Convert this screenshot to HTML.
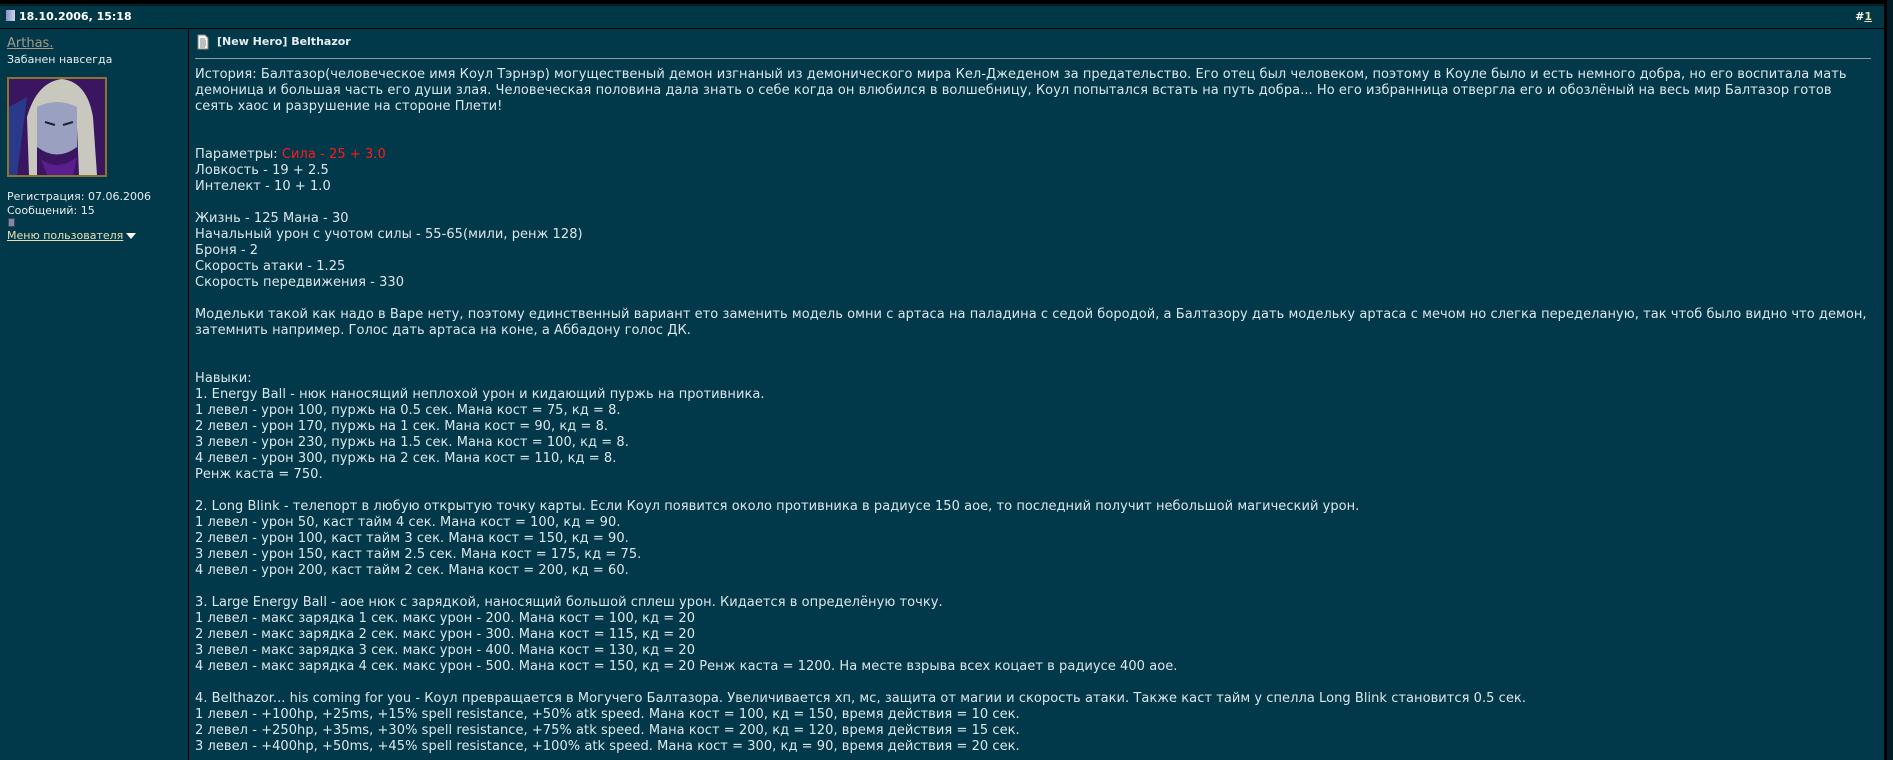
<!DOCTYPE html>
<html><head><meta charset="utf-8"><style>
html,body{margin:0;padding:0;width:1893px;height:760px;overflow:hidden;background:#001a22;}
body{position:relative;font-family:"DejaVu Sans","Liberation Sans",sans-serif;}
.top{position:absolute;left:0;top:0;width:1893px;height:4px;background:#000;}
.topline{position:absolute;left:0;top:4px;width:1885px;height:1px;background:#012a35;}
.hdr{position:absolute;left:0;top:6px;width:1884px;height:22px;background:#023846;border-bottom:1px solid #000;}
.hdr .d{position:absolute;left:19px;top:4px;color:#fff;font-weight:bold;font-size:11px;}
.hdr .n{position:absolute;right:12px;top:4px;color:#fff;font-weight:bold;font-size:11px;}
.hdr .n u{color:#e8e0b0;}
.doc{position:absolute;left:6px;top:10px;width:9px;height:11px;background:linear-gradient(90deg,#8890c0,#d0d4f0);}
.left{position:absolute;left:0;top:29px;width:188px;height:731px;background:#02394a;border-right:1px solid #000;}
.right{position:absolute;left:189px;top:29px;width:1695px;height:731px;background:#02394a;}
.rb{position:absolute;left:1884px;top:0;width:3px;height:760px;background:#000;}
.rb2{position:absolute;left:1887px;top:0;width:6px;height:760px;background:#001d26;}
.l{position:absolute;left:7px;font-size:11px;color:#e6eef0;white-space:nowrap;}
.title{position:absolute;left:217px;top:35px;font-size:11px;font-weight:bold;color:#e6eef0;}
.hr{position:absolute;left:195px;top:58px;width:1676px;height:1px;background:#8a9ea4;}
.txt{position:absolute;left:195px;top:67px;font-size:13px;line-height:16px;color:#dbe6ea;white-space:pre;letter-spacing:0.05px;}
.red{color:#ff1a1a;}
</style></head><body>
<div class="top"></div><div class="topline"></div>
<div class="hdr"><span class="d">18.10.2006, 15:18</span><span class="n">#<u>1</u></span></div>
<div class="doc"></div>
<div class="left"></div>
<div class="right"></div>
<div class="rb"></div><div class="rb2"></div>
<div class="l" style="top:36px;font-size:13px;color:#a89888;text-decoration:underline;">Arthas.</div>
<div class="l" style="top:53px;">Забанен навсегда</div>
<svg style="position:absolute;left:7px;top:77px" width="100" height="100" viewBox="0 0 100 100">
<rect x="0" y="0" width="100" height="100" fill="#8a7430"/>
<rect x="2" y="2" width="96" height="96" fill="#3a1660"/>
<path d="M2 30 L20 20 L10 98 L2 98Z" fill="#2a3a8a"/>
<path d="M22 98 L20 40 Q30 5 55 2 Q80 5 86 40 L90 98 L72 98 L70 50 L30 50 L30 98Z" fill="#c8c8be"/>
<path d="M30 30 Q50 20 70 30 L70 70 Q50 85 30 70Z" fill="#9aa0c0"/>
<path d="M34 82 L40 98 L66 98 L70 80 Q50 95 34 82Z" fill="#5a1e90"/>
<path d="M38 45 L48 48 M56 48 L66 45" stroke="#223" stroke-width="2"/>
</svg>
<div class="l" style="top:190px;">Регистрация: 07.06.2006</div>
<div class="l" style="top:204px;">Сообщений: 15</div>
<div style="position:absolute;left:8px;top:218px;width:5px;height:7px;background:#8088a8;border:1px solid #445;"></div>
<div class="l" style="top:229px;color:#e8e0b0;text-decoration:underline;">Меню пользователя</div>
<div style="position:absolute;left:126px;top:233px;width:0;height:0;border-left:5px solid transparent;border-right:5px solid transparent;border-top:6px solid #fff;"></div>
<svg style="position:absolute;left:197px;top:34px" width="12" height="16" viewBox="0 0 12 16"><path d="M1 1 H8 L11 4 V15 H1Z" fill="#f4f4f4" stroke="#888"/><path d="M3 5H8M3 7H9M3 9H9M3 11H9M3 13H8" stroke="#666" stroke-width="0.8"/></svg>
<div class="title">[New Hero] Belthazor</div>
<div class="hr"></div>
<div class="txt">История: Балтазор(человеческое имя Коул Тэрнэр) могущественый демон изгнаный из демонического мира Кел-Джеденом за предательство. Его отец был человеком, поэтому в Коуле было и есть немного добра, но его воспитала мать
демоница и большая часть его души злая. Человеческая половина дала знать о себе когда он влюбился в волшебницу, Коул попытался встать на путь добра... Но его избранница отвергла его и обозлёный на весь мир Балтазор готов
сеять хаос и разрушение на стороне Плети!


Параметры: <span class="red">Сила - 25 + 3.0</span>
Ловкость - 19 + 2.5
Интелект - 10 + 1.0

Жизнь - 125 Мана - 30
Начальный урон с учотом силы - 55-65(мили, ренж 128)
Броня - 2
Скорость атаки - 1.25
Скорость передвижения - 330

Модельки такой как надо в Варе нету, поэтому единственный вариант ето заменить модель омни с артаса на паладина с седой бородой, а Балтазору дать модельку артаса с мечом но слегка переделаную, так чтоб было видно что демон,
затемнить например. Голос дать артаса на коне, а Аббадону голос ДК.


Навыки:
1. Energy Ball - нюк наносящий неплохой урон и кидающий пуржь на противника.
1 левел - урон 100, пуржь на 0.5 сек. Мана кост = 75, кд = 8.
2 левел - урон 170, пуржь на 1 сек. Мана кост = 90, кд = 8.
3 левел - урон 230, пуржь на 1.5 сек. Мана кост = 100, кд = 8.
4 левел - урон 300, пуржь на 2 сек. Мана кост = 110, кд = 8.
Ренж каста = 750.

2. Long Blink - телепорт в любую открытую точку карты. Если Коул появится около противника в радиусе 150 аое, то последний получит небольшой магический урон.
1 левел - урон 50, каст тайм 4 сек. Мана кост = 100, кд = 90.
2 левел - урон 100, каст тайм 3 сек. Мана кост = 150, кд = 90.
3 левел - урон 150, каст тайм 2.5 сек. Мана кост = 175, кд = 75.
4 левел - урон 200, каст тайм 2 сек. Мана кост = 200, кд = 60.

3. Large Energy Ball - аое нюк с зарядкой, наносящий большой сплеш урон. Кидается в определёную точку.
1 левел - макс зарядка 1 сек. макс урон - 200. Мана кост = 100, кд = 20
2 левел - макс зарядка 2 сек. макс урон - 300. Мана кост = 115, кд = 20
3 левел - макс зарядка 3 сек. макс урон - 400. Мана кост = 130, кд = 20
4 левел - макс зарядка 4 сек. макс урон - 500. Мана кост = 150, кд = 20 Ренж каста = 1200. На месте взрыва всех коцает в радиусе 400 аое.

4. Belthazor... his coming for you - Коул превращается в Могучего Балтазора. Увеличивается хп, мс, защита от магии и скорость атаки. Также каст тайм у спелла Long Blink становится 0.5 сек.
1 левел - +100hp, +25ms, +15% spell resistance, +50% atk speed. Мана кост = 100, кд = 150, время действия = 10 сек.
2 левел - +250hp, +35ms, +30% spell resistance, +75% atk speed. Мана кост = 200, кд = 120, время действия = 15 сек.
3 левел - +400hp, +50ms, +45% spell resistance, +100% atk speed. Мана кост = 300, кд = 90, время действия = 20 сек.</div>
</body></html>
